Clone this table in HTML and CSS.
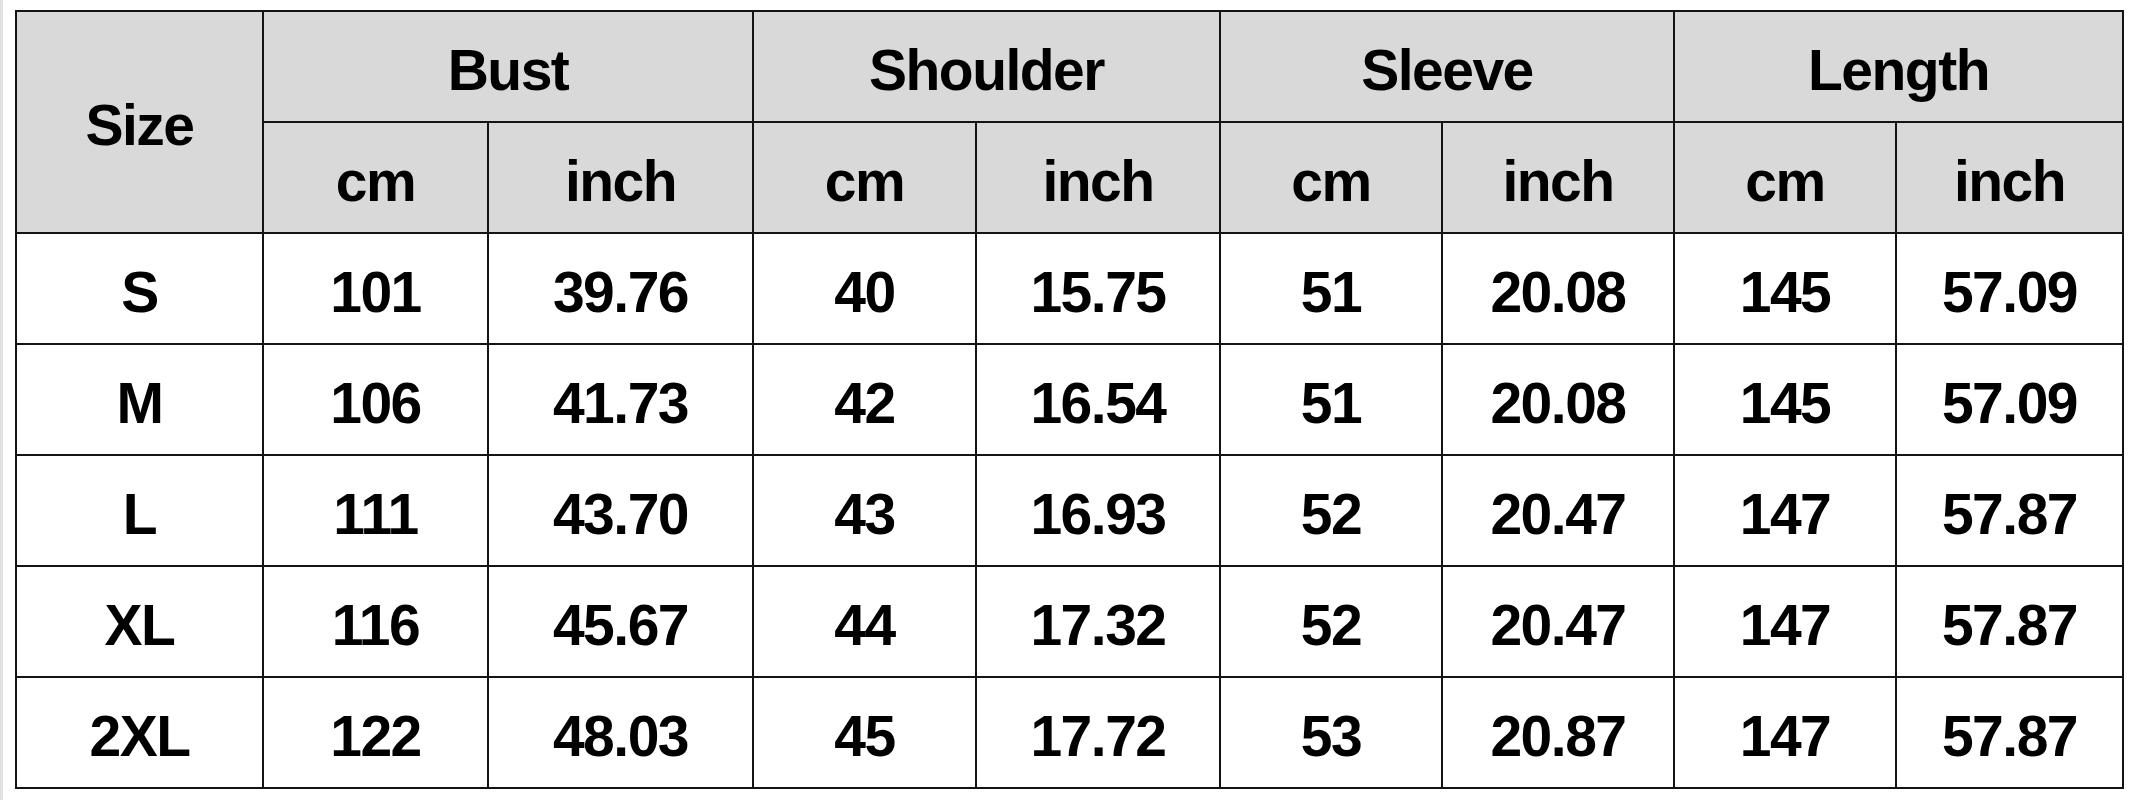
FILE: index.html
```html
<!DOCTYPE html>
<html>
<head>
<meta charset="utf-8">
<link rel="stylesheet" href="styles.css">
</head>
<body>
<div class="page">
  <div class="chart">
    <div class="cell head size">Size</div>
    <div class="cell head group">Bust</div>
    <div class="cell head group">Shoulder</div>
    <div class="cell head group">Sleeve</div>
    <div class="cell head group">Length</div>
    <div class="cell head">cm</div><div class="cell head">inch</div>
    <div class="cell head">cm</div><div class="cell head">inch</div>
    <div class="cell head">cm</div><div class="cell head">inch</div>
    <div class="cell head">cm</div><div class="cell head">inch</div>

    <div class="cell">S</div><div class="cell">101</div><div class="cell">39.76</div><div class="cell">40</div><div class="cell">15.75</div><div class="cell">51</div><div class="cell">20.08</div><div class="cell">145</div><div class="cell">57.09</div>
    <div class="cell">M</div><div class="cell">106</div><div class="cell">41.73</div><div class="cell">42</div><div class="cell">16.54</div><div class="cell">51</div><div class="cell">20.08</div><div class="cell">145</div><div class="cell">57.09</div>
    <div class="cell">L</div><div class="cell">111</div><div class="cell">43.70</div><div class="cell">43</div><div class="cell">16.93</div><div class="cell">52</div><div class="cell">20.47</div><div class="cell">147</div><div class="cell">57.87</div>
    <div class="cell">XL</div><div class="cell">116</div><div class="cell">45.67</div><div class="cell">44</div><div class="cell">17.32</div><div class="cell">52</div><div class="cell">20.47</div><div class="cell">147</div><div class="cell">57.87</div>
    <div class="cell">2XL</div><div class="cell">122</div><div class="cell">48.03</div><div class="cell">45</div><div class="cell">17.72</div><div class="cell">53</div><div class="cell">20.87</div><div class="cell">147</div><div class="cell">57.87</div>
  </div>
</div>
</body>
</html>
```

FILE: styles.css
```css
html, body {
  margin: 0;
  padding: 0;
  background: #ffffff;
}

.page {
  box-sizing: border-box;
  min-height: 800px;
  border-left: 3px solid #e2e2e2;
  padding: 10px 0 0 12px;
}

.chart {
  display: grid;
  grid-template-columns: 245px 223px 263px 221px 242px 220px 230px 220px 225px;
  grid-template-rows: repeat(7, 109px);
  gap: 2px;
  padding: 2px;
  width: max-content;
  background: #141414;
  font-family: "Liberation Sans", Arial, sans-serif;
  font-weight: bold;
  font-size: 57px;
  letter-spacing: -1.5px;
  color: #000;
}

.cell {
  background: #ffffff;
  display: flex;
  align-items: center;
  justify-content: center;
  padding-top: 6px;
  box-sizing: border-box;
  white-space: nowrap;
}

.head {
  background: #d9d9d9;
}

.size {
  grid-row: span 2;
}

.group {
  grid-column: span 2;
}
```
